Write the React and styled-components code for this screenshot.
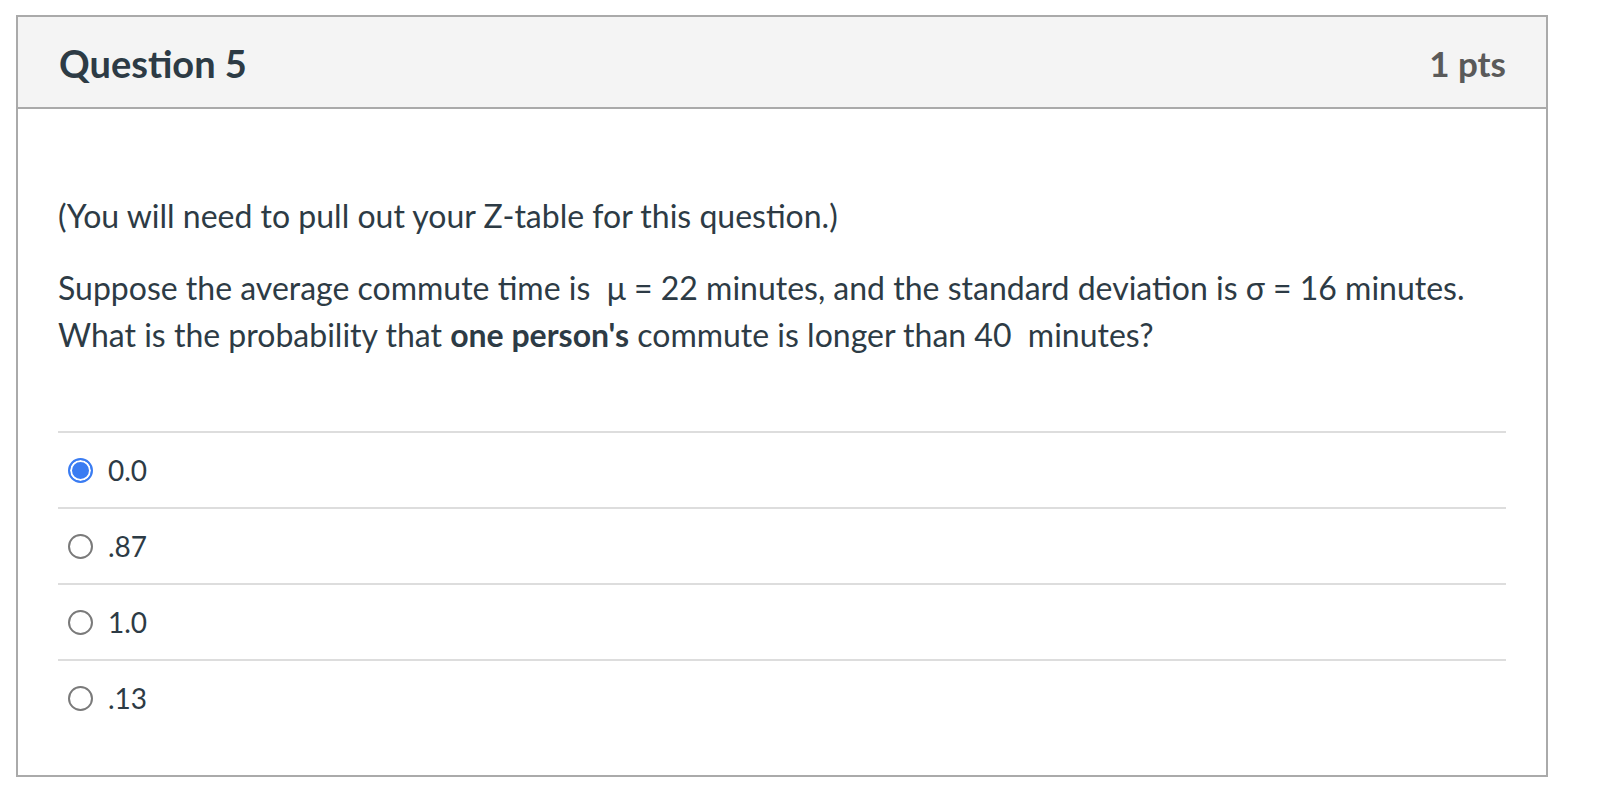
import styled, { createGlobalStyle } from 'styled-components';

const GlobalStyle = createGlobalStyle`
  html, body {
    margin: 0;
    padding: 0;
    background: #ffffff;
  }
  body {
    font-family: Lato, "Liberation Sans", sans-serif;
    color: #2d3b45;
  }
`;

const answers = [
  { label: '0.0', selected: true },
  { label: '.87', selected: false },
  { label: '1.0', selected: false },
  { label: '.13', selected: false },
];

const App = () => {
  return (
    <Page>
      <GlobalStyle />
      <Card>
        <Header>
          <Title>Question 5</Title>
          <Points>1 pts</Points>
        </Header>
        <Body>
          <Paragraph>(You will need to pull out your Z-table for this question.)</Paragraph>
          <Paragraph>
            Suppose the average commute time is &nbsp;μ = 22 minutes, and the standard deviation is σ = 16 minutes.
            <br />
            What is the probability that <strong>one person's</strong> commute is longer than 40 &nbsp;minutes?
          </Paragraph>
          <AnswerList>
            {answers.map((a) => (
              <Answer key={a.label}>
                <Radio selected={a.selected} />
                <Label>{a.label}</Label>
              </Answer>
            ))}
          </AnswerList>
        </Body>
      </Card>
    </Page>
  );
};

export default App;

const Page = styled.div`
  padding: 15px 0 0 16px;
`;

const Card = styled.div`
  width: 1532px;
  box-sizing: border-box;
  border: 2px solid #aaaaaa;
`;

const Header = styled.div`
  height: 92px;
  box-sizing: border-box;
  background: #f4f4f4;
  border-bottom: 2px solid #aaaaaa;
  display: flex;
  align-items: center;
  justify-content: space-between;
  padding: 1px 40px 0 41px;
`;

const Title = styled.h2`
  margin: 0;
  font-size: 38px;
  font-weight: 700;
  color: #2d3b45;
`;

const Points = styled.div`
  font-size: 35px;
  font-weight: 700;
  color: #5a5a5a;
`;

const Body = styled.div`
  padding: 83px 40px 40px 40px;
`;

const Paragraph = styled.p`
  margin: 0 0 25px 0;
  font-size: 32px;
  line-height: 47px;
  color: #2d3b45;

  strong {
    font-weight: 700;
  }
`;

const AnswerList = styled.div`
  margin-top: 73px;
`;

const Answer = styled.div`
  height: 76px;
  display: flex;
  align-items: center;
  border-top: 2px solid #dddddd;
  box-sizing: border-box;
  padding-left: 10px;
`;

const Radio = styled.span`
  width: 25px;
  height: 25px;
  box-sizing: border-box;
  border-radius: 50%;
  border: 2px solid ${(p) => (p.selected ? '#3a7cf2' : '#7a7a7a')};
  background: ${(p) => (p.selected ? '#3a7cf2' : '#ffffff')};
  box-shadow: ${(p) => (p.selected ? 'inset 0 0 0 2px #ffffff' : 'none')};
  flex-shrink: 0;
`;

const Label = styled.span`
  margin-left: 15px;
  font-size: 28px;
  color: #2d3b45;
`;
